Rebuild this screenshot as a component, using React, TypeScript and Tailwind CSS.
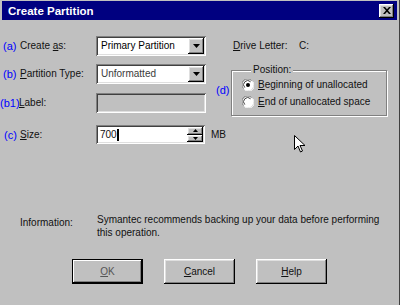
import React from "react";

const sunken =
  "shadow-[inset_1px_1px_0_#808080,inset_-1px_-1px_0_#ffffff,inset_2px_2px_0_#404040,inset_-2px_-2px_0_#dfdfdf]";
const raised =
  "shadow-[inset_-1px_-1px_0_#000000,inset_1px_1px_0_#ffffff,inset_-2px_-2px_0_#808080,inset_2px_2px_0_#dfdfdf]";

function DownArrow() {
  return (
    <svg width="7" height="4" viewBox="0 0 7 4">
      <path d="M0 0h7L3.5 4z" fill="#000" />
    </svg>
  );
}

function Combo({ text, dim }: { text: string; dim?: boolean }) {
  return (
    <div className={`shrink-0 w-[110px] h-[20px] bg-white flex items-center justify-between p-[2px] ${sunken}`}>
      <span className={`pl-[3px] ${dim ? "text-[#3a3a3a]" : "text-black"}`}>{text}</span>
      <div className={`w-[16px] h-[16px] bg-[#c0c0c0] flex items-center justify-center ${raised}`}>
        <DownArrow />
      </div>
    </div>
  );
}

function Radio({ checked }: { checked?: boolean }) {
  return (
    <svg width="12" height="12" viewBox="0 0 12 12">
      <circle cx="6" cy="6" r="5.5" fill="#ffffff" />
      <path d="M1.5 9.5A5.5 5.5 0 0 1 9.5 1.5" stroke="#808080" fill="none" />
      <path d="M2.8 8.6A4 4 0 0 1 8.6 2.8" stroke="#404040" fill="none" />
      <path d="M10.5 2.5A5.5 5.5 0 0 1 2.5 10.5" stroke="#ffffff" fill="none" />
      {checked && <circle cx="6" cy="6" r="2" fill="#000" />}
    </svg>
  );
}

export default function App() {
  return (
    <div className="relative w-[400px] h-[305px] bg-[#c0c0c0] overflow-hidden border-r border-[#404040] font-['Liberation_Sans',Arial,sans-serif] text-[10px] leading-[12px] text-[#111111]">
      {/* Title bar */}
      <div className="mt-[1px] mx-[2px] h-[19px] bg-[#000080] flex items-center justify-between pl-[6px] pr-[3px]">
        <span className="text-white font-bold text-[11.5px]">Create Partition</span>
        <div className={`w-[15px] h-[14px] bg-[#c0c0c0] flex items-center justify-center ${raised}`}>
          <svg width="8" height="7" viewBox="0 0 8 7">
            <path d="M0 0h2l2 2.2L6 0h2L5 3.5 8 7H6L4 4.8 2 7H0l3-3.5z" fill="#000" />
          </svg>
        </div>
      </div>

      {/* Main content */}
      <div className="flex mt-[16px]">
        {/* Left column */}
        <div className="w-[214px] shrink-0 flex flex-col">
          <div className="flex items-center h-[20px]">
            <div className="w-[96px] shrink-0 flex items-center">
              <span className="ml-[3px] w-[17px] text-[11px] text-[#0000ff]">(a)</span>
              <span>
                Create <u>a</u>s:
              </span>
            </div>
            <Combo text="Primary Partition" />
          </div>
          <div className="flex items-center h-[20px] mt-[8px]">
            <div className="w-[96px] shrink-0 flex items-center">
              <span className="ml-[3px] w-[17px] text-[11px] text-[#0000ff]">(b)</span>
              <span>
                <u>P</u>artition Type:
              </span>
            </div>
            <Combo text="Unformatted" dim />
          </div>
          <div className="flex items-center h-[20px] mt-[9px]">
            <div className="w-[96px] shrink-0 flex items-center">
              <span className="w-[19px] text-[11px] text-[#0000ff]">(b1)</span>
              <span>
                <u>L</u>abel:
              </span>
            </div>
            <div className={`shrink-0 w-[110px] h-[20px] bg-[#c0c0c0] ${sunken}`} />
          </div>
          <div className="flex items-center h-[19px] mt-[12px]">
            <div className="w-[96px] shrink-0 flex items-center">
              <span className="ml-[4px] w-[16px] text-[11px] text-[#0000ff]">(c)</span>
              <span>
                <u>S</u>ize:
              </span>
            </div>
            <div className={`shrink-0 w-[109px] h-[19px] bg-white flex items-center justify-between p-[2px] ${sunken}`}>
              <div className="flex items-center pl-[2px]">
                <span>700</span>
                <span className="w-[2px] h-[12px] bg-black" />
              </div>
              <div className="flex flex-col w-[16px] h-[15px]">
                <div className={`flex-1 bg-[#c0c0c0] flex items-center justify-center ${raised}`}>
                  <svg width="5" height="3" viewBox="0 0 5 3">
                    <path d="M2.5 0L5 3H0z" fill="#000" />
                  </svg>
                </div>
                <div className={`flex-1 bg-[#c0c0c0] flex items-center justify-center ${raised}`}>
                  <svg width="5" height="3" viewBox="0 0 5 3">
                    <path d="M0 0h5L2.5 3z" fill="#000" />
                  </svg>
                </div>
              </div>
            </div>
            <span className="ml-[6px] shrink-0 whitespace-nowrap">MB</span>
          </div>
        </div>

        {/* Right column */}
        <div className="flex flex-col">
          <div className="flex items-center h-[20px] pl-[19px]">
            <span className="w-[66px]">
              <u>D</u>rive Letter:
            </span>
            <span>C:</span>
          </div>
          <div className="flex items-center mt-[8px]">
            <span className="w-[15px] pl-[2px] text-[11px] text-[#0000ff]">(d)</span>
            <fieldset className="ml-[2px] w-[156px] h-[52px] border border-[#808080] shadow-[inset_1px_1px_0_#ffffff,1px_1px_0_#ffffff] px-0 pb-0 pt-0 m-0">
              <legend className="ml-[19px] px-[2px] bg-[#c0c0c0] leading-[12px]">Position:</legend>
              <div className="flex items-center h-[14px] mt-[2px] pl-[10px] gap-[4px]">
                <Radio checked />
                <span>
                  <u>B</u>eginning of unallocated
                </span>
              </div>
              <div className="flex items-center h-[14px] mt-[3px] pl-[10px] gap-[4px]">
                <Radio />
                <span>
                  <u>E</u>nd of unallocated space
                </span>
              </div>
            </fieldset>
          </div>
        </div>
      </div>

      {/* Information */}
      <div className="flex mt-[69px] leading-[13px]">
        <div className="w-[97px] pl-[20px] pt-[3px]">Information:</div>
        <div>
          Symantec recommends backing up your data before performing
          <br />
          this operation.
        </div>
      </div>

      {/* Buttons */}
      <div className="flex mt-[20px] pl-[72px] gap-[21px]">
        <div className="w-[71px] h-[25px] flex items-center justify-center border border-black bg-[#c0c0c0] text-[#555555] shadow-[inset_-1px_-1px_0_#000000,inset_1px_1px_0_#ffffff,inset_-2px_-2px_0_#808080]">
          <span>
            <u>O</u>K
          </span>
        </div>
        <div className={`w-[71px] h-[25px] flex items-center justify-center bg-[#c0c0c0] ${raised}`}>
          <span>
            <u>C</u>ancel
          </span>
        </div>
        <div className={`w-[71px] h-[25px] flex items-center justify-center bg-[#c0c0c0] ${raised}`}>
          <span>
            <u>H</u>elp
          </span>
        </div>
      </div>

      {/* Mouse pointer */}
      <svg className="absolute left-[294px] top-[135px]" width="11" height="18" viewBox="0 0 11 18">
        <path d="M0.5 0.5v14l3.5-3.5 2.5 6 2-1-2.5-5.5h5z" fill="#ffffff" stroke="#000" strokeWidth="1" />
      </svg>
    </div>
  );
}
